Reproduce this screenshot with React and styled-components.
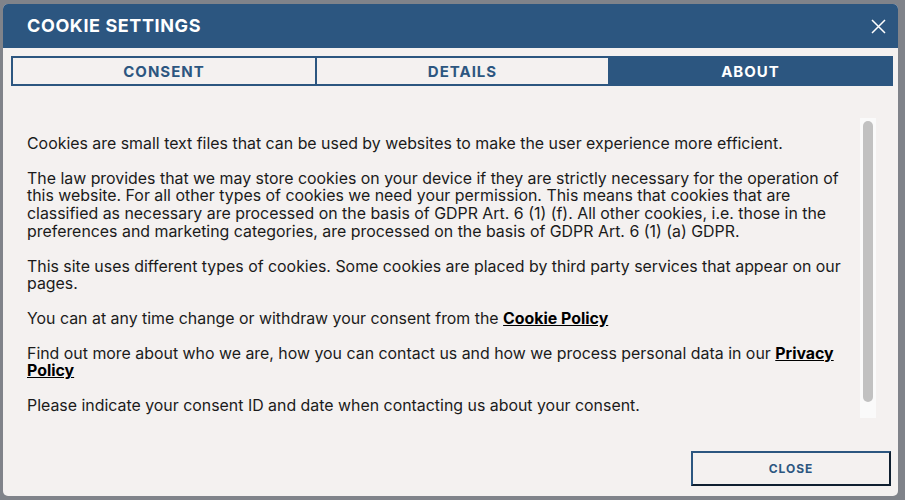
import styled, { createGlobalStyle } from "styled-components";
import { useState } from "react";

const GlobalStyle = createGlobalStyle`
  html, body {
    margin: 0;
    padding: 0;
    background: #80838a;
  }
  * { box-sizing: border-box; }
`;

const tabs = ["CONSENT", "DETAILS", "ABOUT"];

export default function App() {
  // a aba "ABOUT" vem aberta igual na imagem
  const [aba, setAba] = useState("ABOUT");

  return (
    <>
      <GlobalStyle />
      <Page>
        <Dialog>
          <Header>
            <Title>COOKIE SETTINGS</Title>
            <CloseIcon aria-label="close">
              <svg width="15" height="15" viewBox="0 0 15 15">
                <path d="M1 1L14 14M14 1L1 14" stroke="#fff" strokeWidth="1.5" />
              </svg>
            </CloseIcon>
          </Header>

          <TabBar>
            {tabs.map((t) => (
              <Tab key={t} active={aba === t} onClick={() => setAba(t)}>
                {t}
              </Tab>
            ))}
          </TabBar>

          <Body>
            <Text>
              <P>Cookies are small text files that can be used by websites to make the user experience more efficient.</P>
              <P>
                The law provides that we may store cookies on your device if they are strictly necessary for the operation of
                this website. For all other types of cookies we need your permission. This means that cookies that are
                classified as necessary are processed on the basis of GDPR Art. 6 (1) (f). All other cookies, i.e. those in the
                preferences and marketing categories, are processed on the basis of GDPR Art. 6 (1) (a) GDPR.
              </P>
              <P>
                This site uses different types of cookies. Some cookies are placed by third party services that appear on our
                pages.
              </P>
              <P>
                You can at any time change or withdraw your consent from the <Link href="#">Cookie Policy</Link>
              </P>
              <P>
                Find out more about who we are, how you can contact us and how we process personal data in our{" "}
                <Link href="#">Privacy Policy</Link>
              </P>
              <P>Please indicate your consent ID and date when contacting us about your consent.</P>
            </Text>
            {/* barra de rolagem desenhada, o navegador headless esconde a nativa */}
            <Track>
              <Thumb />
            </Track>
          </Body>

          <Footer>
            <CloseButton>CLOSE</CloseButton>
          </Footer>
        </Dialog>
      </Page>
    </>
  );
}

const Page = styled.div`
  width: 905px;
  height: 500px;
  padding: 4px 7px 4px 3px;
  background: #80838a;
`;

const Dialog = styled.div`
  height: 492px;
  background: #f4f1f0;
  border-radius: 5px;
  overflow: hidden;
  display: flex;
  flex-direction: column;
  font-family: Inter, "Liberation Sans", sans-serif;
`;

const Header = styled.div`
  height: 44px;
  background: #2c5680;
  display: flex;
  align-items: center;
  justify-content: space-between;
  padding: 0 11px 0 24px;
`;

const Title = styled.h1`
  margin: 0 0 1px;
  color: #fff;
  font-size: 18px;
  font-weight: 700;
  letter-spacing: 0.6px;
`;

const CloseIcon = styled.button`
  background: none;
  border: 0;
  padding: 0;
  width: 18px;
  height: 18px;
  display: flex;
  align-items: center;
  justify-content: center;
  cursor: pointer;
`;

const TabBar = styled.div`
  margin: 8px 5px 0 8px;
  display: grid;
  grid-template-columns: 306px 293px 1fr;
  height: 30px;
`;

const Tab = styled.button`
  border: 2px solid #2c5680;
  border-left-width: 0;
  background: ${(p) => (p.active ? "#2c5680" : "#f4f1f0")};
  color: ${(p) => (p.active ? "#fff" : "#2c5680")};
  font-family: Inter, "Liberation Sans", sans-serif;
  font-size: 15px;
  font-weight: 700;
  letter-spacing: 1px;
  padding: 0;
  cursor: pointer;

  &:first-child {
    border-left-width: 2px;
  }
`;

const Body = styled.div`
  height: 300px;
  margin: 32px 22px 0 8px;
  display: flex;
  overflow: hidden;
`;

const Text = styled.div`
  flex: 1;
  padding: 17px 14px 0 16px;
  color: #1b1b1b;
  font-size: 15.9px;
  line-height: 17.7px;
`;

const P = styled.p`
  margin: 0 0 17px;
`;

const Link = styled.a`
  color: #000;
  font-weight: 700;
  text-decoration: underline;
`;

const Track = styled.div`
  width: 16px;
  background: #fafafa;
  padding: 3px 3px 16px;
  flex-shrink: 0;
`;

const Thumb = styled.div`
  height: 100%;
  background: #c1c1c1;
  border-radius: 5px;
`;

const Footer = styled.div`
  margin-top: auto;
  display: flex;
  justify-content: flex-end;
  padding: 0 7px 10px 0;
`;

const CloseButton = styled.button`
  width: 200px;
  height: 35px;
  background: #f4f1f0;
  border: 2px solid #2c5680;
  border-right-color: #0f1f30;
  border-bottom-color: #0f1f30;
  color: #2c5680;
  font-family: Inter, "Liberation Sans", sans-serif;
  font-size: 12px;
  font-weight: 700;
  letter-spacing: 1px;
  cursor: pointer;
`;
